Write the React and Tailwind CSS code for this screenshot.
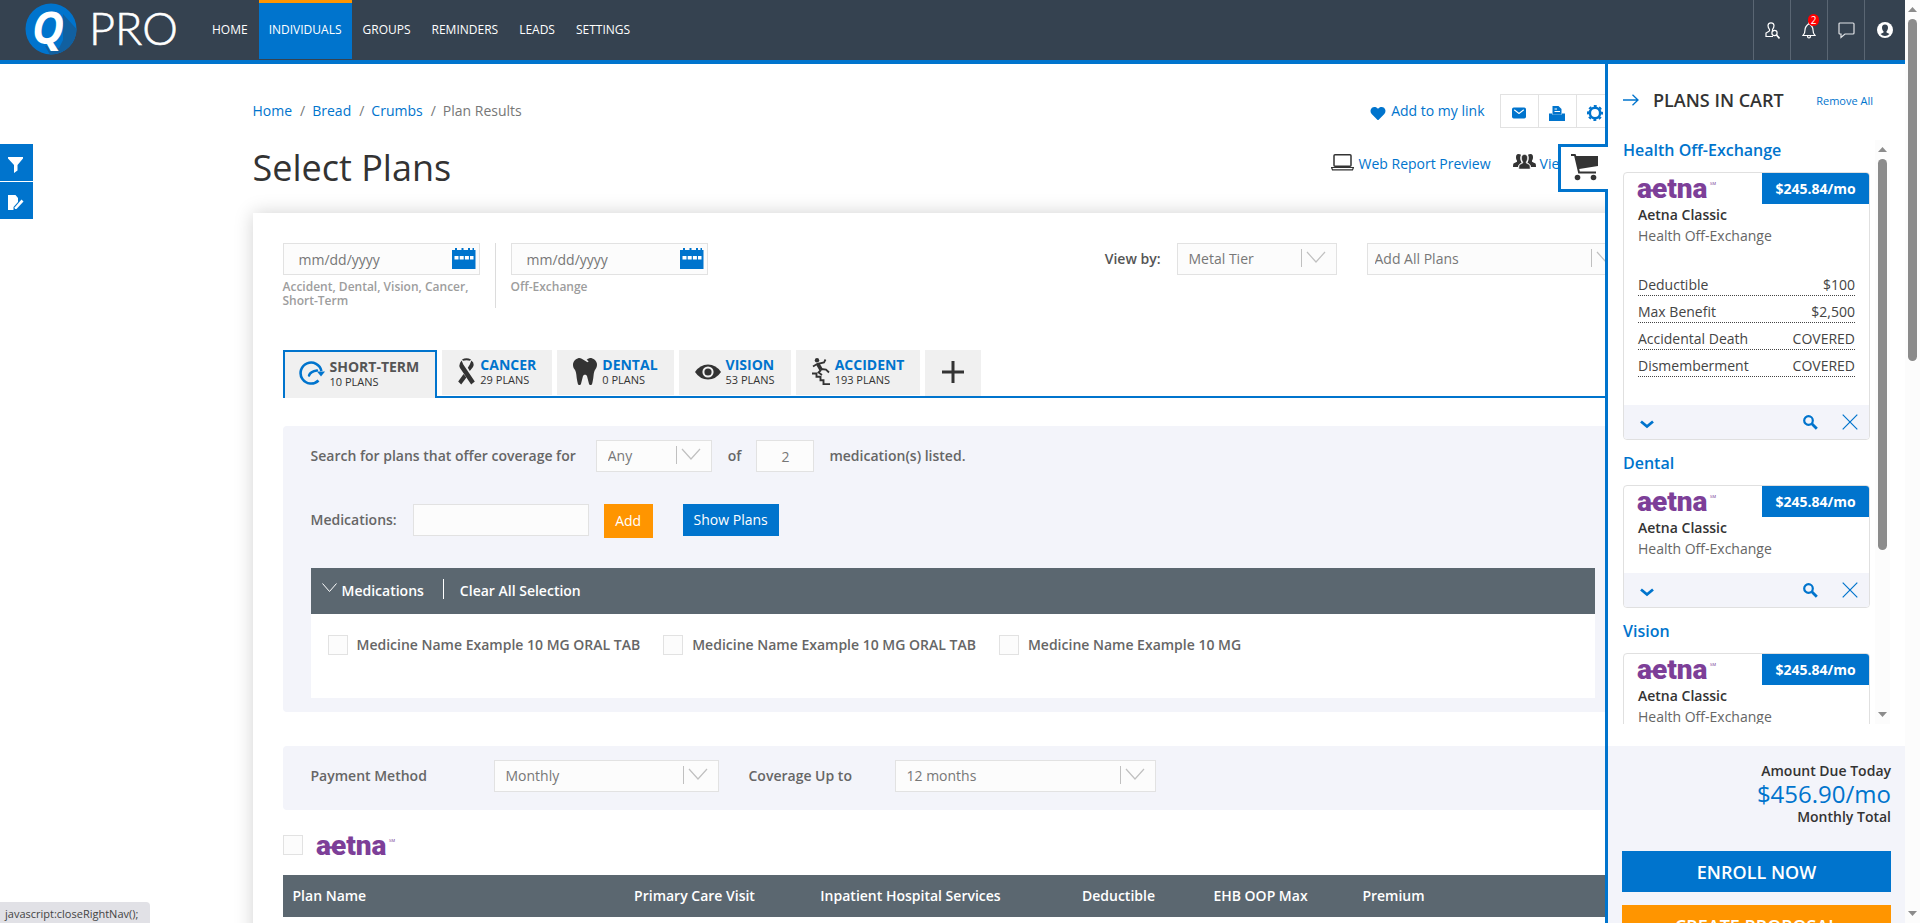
import { useState } from "react";
import { FaHeart, FaTooth } from "react-icons/fa";
import { IoMail } from "react-icons/io5";

const navLinks = ["Home", "Individuals", "Groups", "Reminders", "Leads", "Settings"];

const crumbs = ["Home", "Bread", "Crumbs"];

const planTabs = [
  { id: "short", label: "Short-Term", plans: 10, Icon: GaugeIcon },
  { id: "cancer", label: "Cancer", plans: 29, Icon: RibbonIcon },
  { id: "dental", label: "Dental", plans: 0, Icon: ToothIcon },
  { id: "vision", label: "Vision", plans: 53, Icon: EyeIcon },
  { id: "accident", label: "Accident", plans: 193, Icon: StairsIcon },
];

const medicines = [
  "Medicine Name Example 10 MG ORAL TAB",
  "Medicine Name Example 10 MG ORAL TAB",
  "Medicine Name Example 10 MG",
];

const cartPlans = [
  {
    title: "Health Off-Exchange",
    details: [
      ["Deductible", "$100"],
      ["Max Benefit", "$2,500"],
      ["Accidental Death", "COVERED"],
      ["Dismemberment", "COVERED"],
    ],
  },
  { title: "Dental" },
  { title: "Vision" },
];

function GaugeIcon() {
  return (
    <svg width="26" height="26" viewBox="0 0 26 26" fill="none" stroke="#0074cd">
      <path d="M19.5 20.5A10.5 10.5 0 1 1 22.4 11" strokeWidth="2.6" />
      <path d="M18 11.5h8l-4 5z" fill="#0074cd" stroke="none" />
      <path d="M10 15.5c1-3 4-4.500 8-5" strokeWidth="2.400" strokeLinecap="round" />
    </svg>
  );
}

function RibbonIcon() {
  return (
    <svg width="17" height="27" viewBox="0 0 17 27" fill="#333">
      <path d="M4 1.500Q8.500-.8 13 1.500l-1 1.300Q8.500 1.500 5 2.800z" />
      <path d="M3.600 2.500 5.300 6.500l11.500 17-3.600 3L2 10Q.8 7.500 2 5z" />
      <path d="m13.400 2.500-1.600 4-2 3.200 2 3.200 3.200-3.900q1.300-2 .2-4.500z" />
      <path d="m5.600 16 2.800 3.600L3.200 26.500.2 23.500z" />
    </svg>
  );
}

function ToothIcon() {
  return <FaTooth className="h-[27px] w-6 text-[#333]" preserveAspectRatio="none" />;
}

function EyeIcon() {
  return (
    <svg width="26" height="16" viewBox="0 0 26 16">
      <path d="M0 8Q5 .5 13 .5T26 8q-5 7.500-13 7.500T0 8z" fill="#333" />
      <circle cx="13" cy="8" r="4.600" fill="none" stroke="#f0f0f0" strokeWidth="2" />
    </svg>
  );
}

function StairsIcon() {
  return (
    <svg width="18" height="27" viewBox="0 0 18 27" fill="none" stroke="#333">
      <circle cx="5" cy="2.200" r="2.200" fill="#333" stroke="none" />
      <path d="M5.500 5.500 9 11.500" strokeWidth="3.600" />
      <path d="M1 8.500l4-2.500 7-1.500 1.500-3M9 11l5 .5 3 3M9 12l-2.500 2.500 3.500 2.500" strokeWidth="1.800" />
      <path d="M0 15.500h4.500v3.200h4v3.600h3v3.800H18" strokeWidth="1.900" />
    </svg>
  );
}

function AetnaLogo() {
  return (
    <svg width="80" height="27" viewBox="0 0 80 27" className="overflow-visible" role="img" aria-label="aetna">
      <text x="0" y="23" fontSize="28" fontWeight="900" fill="#7d3f98" fontFamily="Roboto, sans-serif">
        aetna
      </text>
      <path d="M13 15.500h5" stroke="#7d3f98" strokeWidth="2.500" />
      <text x="73" y="10" fontSize="4" fill="#7d3f98" fontFamily="Roboto, sans-serif">
        SM
      </text>
    </svg>
  );
}

function BrandLogo() {
  return (
    <svg width="153" height="56" viewBox="0 0 153 56" className="overflow-visible" role="img" aria-label="Q PRO">
      <clipPath id="disc">
        <circle cx="26" cy="29" r="25.500" />
      </clipPath>
      <circle cx="26" cy="29" r="25.500" fill="#0074cd" />
      <path d="M38 14 56 34v26H28L20 46l14 2 4-8z" fill="#1160a0" clipPath="url(#disc)" />
      <text x="7" y="44" fontSize="44" fontWeight="700" fontStyle="italic" fill="#fff" fontFamily="'Open Sans', sans-serif">
        Q
      </text>
      <text x="64" y="45" fontSize="45" fontWeight="300" fill="#fff" stroke="#fff" strokeWidth=".6" fontFamily="Lato, sans-serif">
        PRO
      </text>
    </svg>
  );
}

function Select({ id, width, padding = "pl-[11px]", children, label }) {
  return (
    <div className={`relative h-8 shrink-0 ${width}`}>
      <select
        id={id}
        aria-label={label}
        className={`h-full w-full appearance-none border border-[#e2e2e2] bg-[#fcfcfc] pr-9 text-sm text-[#777] ${padding}`}
      >
        {children}
      </select>
      <svg
        className="pointer-events-none absolute right-[11px] top-1.5"
        width="25"
        height="19"
        viewBox="0 0 25 19"
        fill="none"
        stroke="#c0c0c0"
      >
        <path d="M.5 0v18" />
        <path d="m6 3 9 10 9-10" strokeWidth="1.200" />
      </svg>
    </div>
  );
}

function DateField({ label, hint }) {
  return (
    <div className="w-[197px]">
      <div className="relative h-8">
        <input
          type="text"
          aria-label={label}
          placeholder="mm/dd/yyyy"
          className="h-full w-full border border-[#e2e2e2] bg-[#fcfcfc] pl-[15px] pr-10 text-sm placeholder:text-[#777]"
        />
        <button type="button" aria-label="Open calendar" className="absolute right-1 top-1">
          <svg width="24" height="24" viewBox="0 0 24 24" fill="#0074cd">
            <path d="M0 3h3V1h2v2h4.500V1h2v2H16V1h2v2h2.500V1h1.500v2h1.500v19H0z" />
            <path d="M2.500 9h4v3.500h-4zM7.700 9h4v3.500h-4zM12.900 9h4v3.500h-4zM18 9h3.500v3.500H18z" fill="#fff" />
          </svg>
        </button>
      </div>
      <p className="mt-[5px] text-xs font-semibold leading-[14px] text-[#9d9d9d]">{hint}</p>
    </div>
  );
}

function Checkbox({ label, id }) {
  return (
    <input
      type="checkbox"
      id={id}
      aria-label={label}
      className="h-5 w-5 shrink-0 appearance-none border border-[#e2e2e2] bg-[#fcfcfc] checked:bg-[#0074cd]"
    />
  );
}

function Header() {
  const [active, setActive] = useState("Individuals");

  return (
    <header className="flex h-16 shrink-0 border-b-4 border-[#0074cd] bg-[#354250] pl-[25px]">
      <a href="#home">
        <BrandLogo />
      </a>
      <nav className="ml-6 flex gap-px">
        {navLinks.map((link) => (
          <a
            key={link}
            href={`#${link.toLowerCase()}`}
            onClick={() => setActive(link)}
            className={`flex h-[59px] items-center border-t-[3px] px-2.5 pb-[3px] text-xs uppercase text-white ${
              active === link ? "border-[#ff9500] bg-[#0074cd]" : "border-transparent"
            }`}
          >
            {link}
          </a>
        ))}
      </nav>
      <div className="ml-auto flex text-white">
        <button type="button" aria-label="Find client" className="flex w-[37px] items-center justify-center border-l border-[#5a6673]">
          <svg width="15" height="17" viewBox="0 0 15 17" fill="none" stroke="#fff" strokeWidth="1.200">
            <path d="M4.500 9V7.500Q3 5.500 3 3.500 3.300.8 6 .8t3 2.700q0 2-1.500 4V9" />
            <path d="M4.500 9 1 11v3.500h7M8 8.500l1 .5" />
            <circle cx="9.500" cy="11" r="2.600" />
            <path d="m11.500 13 3 3.500" strokeWidth="1.600" />
          </svg>
        </button>
        <button type="button" aria-label="Notifications" className="relative flex w-[37px] items-center justify-center border-l border-[#5a6673]">
          <svg width="14" height="18" viewBox="0 0 14 18" fill="none" stroke="#fff" strokeWidth="1.200">
            <path d="M1 14.500h12q-2-2-2-5.500T7 2.500Q3 5.500 3 9t-2 5.500zM5.500 15q0 2 1.500 2t1.500-2M7 2.500V1" />
          </svg>
          <span className="absolute right-2 top-3.5 flex h-3 w-[11px] items-center justify-center rounded-full bg-[#f00] text-[10px] leading-none">
            2
          </span>
        </button>
        <button type="button" aria-label="Messages" className="flex w-[37px] items-center justify-center border-l border-[#5a6673]">
          <svg width="17" height="17" viewBox="0 0 17 17" fill="none" stroke="#dfe2e5" strokeWidth="1.200">
            <path d="M2 1h13q1 0 1 1v9q0 1-1 1H7l-4 3.500V12H2q-1 0-1-1V2q0-1 1-1z" />
          </svg>
        </button>
        <button type="button" aria-label="Account" className="flex w-[41px] items-center justify-center border-l border-[#5a6673]">
          <svg width="16" height="16" viewBox="0 0 16 16">
            <circle cx="8" cy="8" r="8" fill="#fff" />
            <path d="M8 2.500c2.300 0 3 1.600 3 3.200S10.300 8.500 9.500 9.300v1.200l3 1.600Q10.500 14 8 14t-4.500-1.900l3-1.600V9.300C5.700 8.500 5 7.300 5 5.700S5.700 2.500 8 2.500z" fill="#354250" />
          </svg>
        </button>
      </div>
    </header>
  );
}

function PageTop() {
  return (
    <div>
      <div className="flex h-[34px] items-center">
        <nav aria-label="Breadcrumb" className="flex gap-[7px] text-sm text-[#777]">
          {crumbs.map((crumb) => (
            <span key={crumb} className="flex gap-2">
              <a href="#crumb" className="text-[#0074cd]">
                {crumb}
              </a>
              /
            </span>
          ))}
          <span>Plan Results</span>
        </nav>
        <a href="#link" className="ml-auto flex items-center gap-[5px] text-sm text-[#0074cd]">
          <FaHeart className="mt-1 h-[15px] w-4" />
          Add to my link
        </a>
        <div className="ml-[15px] flex h-[34px] border border-[#e2e2e2] text-[#0074cd]">
          <button type="button" aria-label="Email" className="flex w-[37px] items-center justify-center pt-1">
            <IoMail className="h-4 w-[18px]" />
          </button>
          <button type="button" aria-label="Print" className="flex w-[38px] items-center justify-center border-l border-[#e2e2e2] pt-1">
            <svg width="16" height="16" viewBox="0 0 16 16" fill="currentColor">
              <path d="M3.500 1h6l3 3v5.500h-9z" />
              <path d="M0 8.500h3v3h10v-3h3V16H0z" />
              <path d="M3 11h10" stroke="currentColor" strokeWidth="3" />
              <path d="M5.500 4h2.500M5.500 6.500H11" stroke="#fff" />
            </svg>
          </button>
          <button type="button" aria-label="Settings" className="flex w-[38px] items-center justify-center border-l border-[#e2e2e2] pt-1">
            <svg width="16" height="16" viewBox="0 0 16 16" fill="none" stroke="currentColor">
              <circle cx="8" cy="8" r="5.200" strokeWidth="2.600" />
              <circle cx="8" cy="8" r="7" strokeWidth="2" strokeDasharray="2.900 2.600" strokeDashoffset="1.400" />
            </svg>
          </button>
          <button type="button" aria-label="More" className="w-[38px] border-l border-[#e2e2e2]" />
        </div>
      </div>
      <div className="mt-[13px] flex h-[50px] items-center">
        <h1 className="pt-[3px] text-4xl text-[#333]">Select Plans</h1>
        <div className="ml-auto flex w-[322px] pb-[5px] text-sm text-[#0074cd]">
          <a href="#report" className="flex items-center gap-[5px]">
            <svg width="23" height="18" viewBox="0 0 23 18" fill="none" stroke="#333" className="mb-1">
              <rect x="3" y="1.700" width="17" height="11.500" rx="1" strokeWidth="1.500" />
              <path d="M.5 14.500h22l-1 2.300h-20z" strokeWidth="1.200" />
            </svg>
            Web Report Preview
          </a>
          <a href="#view" className="ml-[22px] flex items-center gap-1">
            <svg width="23" height="17" viewBox="0 0 23 17" fill="#333" className="mb-1">
              <path d="M5.500 1C3.500 1 3 2.500 3 4.500c0 1.500.6 2.500 1 3.200v1.100L.5 10.500Q0 11 0 14h5q.3-3 3.500-4.200L7.800 8C7 6 7 3.500 8 1.800Q7 1 5.500 1z" />
              <path d="M17.500 1c2 0 2.500 1.500 2.500 3.500 0 1.500-.6 2.500-1 3.200v1.100l3.500 1.700q.5.500.5 3.500h-5q-.3-3-3.500-4.200l.7-1.800c.8-2 .8-4.500-.2-6.200Q16 1 17.500 1z" />
              <path d="M11.500 1.500c-2.200 0-3 1.500-3 3.500s.7 3 1.300 3.800V10l-3 1.500q-1 .5-1 4.500h11.400q0-4-1-4.500l-3-1.500V8.800c.6-.8 1.300-1.800 1.300-3.800s-.8-3.500-3-3.500z" stroke="#fff" strokeWidth=".5" />
            </svg>
            View
          </a>
        </div>
      </div>
    </div>
  );
}

function PlanTabs() {
  const [selected, setSelected] = useState("short");

  return (
    <div className="mt-[42px] flex h-12 items-end" role="tablist">
      {planTabs.map(({ id, label, plans, Icon }) => {
        const isActive = selected === id;
        return (
          <div
            key={id}
            className={`flex h-full ${isActive ? "" : "border-b-2 border-[#0074cd] pl-[5px]"}`}
          >
            <button
              type="button"
              role="tab"
              aria-selected={isActive}
              onClick={() => setSelected(id)}
              className={`flex items-center gap-[5px] bg-[#f0f0f0] ${
                isActive
                  ? "h-full border-2 border-b-0 border-[#0074cd] pb-1 pl-3.5 pr-4"
                  : "h-[45px] px-4 pb-0.5"
              }`}
            >
              <Icon />
              <span className="text-left">
                <span
                  className={`block text-sm font-bold uppercase leading-4 ${
                    isActive ? "text-[#555]" : "text-[#0074cd]"
                  }`}
                >
                  {label}
                </span>
                <span className="block text-[11px] uppercase leading-[13px] text-[#333]">
                  {plans} Plans
                </span>
              </span>
            </button>
          </div>
        );
      })}
      <div className="h-full flex-1 border-b-2 border-[#0074cd] pl-[5px]">
        <button type="button" aria-label="Add plan type" className="flex h-full w-14 items-center justify-center bg-[#f0f0f0] pb-0.5">
          <svg width="22" height="22" viewBox="0 0 22 22" stroke="#333" strokeWidth="3">
            <path d="M11 0v22M0 11h22" />
          </svg>
        </button>
      </div>
    </div>
  );
}

function MedicationSearch() {
  return (
    <section className="mt-7 rounded bg-[#f3f4fa] px-7 py-3.5 text-sm font-semibold text-[#666]">
      <div className="flex h-8 items-center">
        <label htmlFor="coverage">Search for plans that offer coverage for</label>
        <div className="ml-5 mr-4 font-normal">
          <Select id="coverage" width="w-[116px]">
            <option>Any</option>
            <option>All</option>
          </Select>
        </div>
        of
        <input
          type="text"
          defaultValue="2"
          aria-label="Number of medications"
          className="mx-[15px] h-8 w-[58px] border border-[#e2e2e2] bg-[#fcfcfc] text-center font-normal text-[#777]"
        />
        medication(s) listed.
      </div>
      <div className="mt-8 flex h-[34px] items-start">
        <label htmlFor="medication" className="flex h-8 items-center">
          Medications:
        </label>
        <input
          id="medication"
          type="text"
          className="ml-4 h-8 w-44 border border-[#e2e2e2] bg-[#fcfcfc] px-3 font-normal"
        />
        <button type="button" className="ml-[15px] h-[34px] w-[49px] bg-[#ff9500] font-normal text-white">
          Add
        </button>
        <button type="button" className="ml-[30px] h-8 w-24 bg-[#0074cd] font-normal text-white">
          Show Plans
        </button>
      </div>
      <div className="mt-[30px] flex h-[46px] items-center bg-[#5b6770] pl-[11px] text-white">
        <button type="button" className="flex items-center gap-[5px]">
          <svg width="15" height="10" viewBox="0 0 15 10" fill="none" stroke="#fff" className="mb-1.5">
            <path d="m.5.500 7 8 7-8" />
          </svg>
          Medications
        </button>
        <span className="mb-1 ml-[19px] h-5 w-px bg-white" />
        <button type="button" className="ml-4">
          Clear All Selection
        </button>
      </div>
      <div className="flex h-[84px] gap-[23px] bg-white pl-[17px] pt-[21px]">
        {medicines.map((name, i) => (
          <div key={i} className="flex h-5 items-center gap-[9px]">
            <Checkbox id={`med-${i}`} />
            <label htmlFor={`med-${i}`}>{name}</label>
          </div>
        ))}
      </div>
    </section>
  );
}

function PlanTable() {
  return (
    <>
      <section className="mt-[34px] flex items-center rounded bg-[#f3f4fa] px-7 pb-[18px] pt-3.5 text-sm font-semibold text-[#666]">
        <label htmlFor="payment" className="w-[183px]">
          Payment Method
        </label>
        <Select id="payment" width="w-[225px] font-normal">
          <option>Monthly</option>
        </Select>
        <label htmlFor="months" className="ml-[30px] w-[146px]">
          Coverage Up to
        </label>
        <Select id="months" width="w-[261px] font-normal">
          <option>12 months</option>
        </Select>
      </section>
      <div className="mt-[25px] flex h-5 items-center gap-[13px]">
        <Checkbox label="Select all Aetna plans" />
        <AetnaLogo />
      </div>
      <table className="mt-5 w-full table-fixed bg-[#5b6770] text-sm text-white">
        <colgroup>
          <col className="w-[312px]" />
          <col className="w-[200px]" />
          <col className="w-[232px]" />
          <col className="w-[184px]" />
          <col className="w-[100px]" />
          <col className="w-[166px]" />
          <col />
        </colgroup>
        <thead>
          <tr className="h-[42px] whitespace-nowrap">
            <th className="pl-2.5 text-left font-semibold">Plan Name</th>
            <th className="font-semibold">Primary Care Visit</th>
            <th className="font-semibold">Inpatient Hospital Services</th>
            <th className="font-semibold">Deductible</th>
            <th className="font-semibold">EHB OOP Max</th>
            <th className="font-semibold">Premium</th>
            <th />
          </tr>
        </thead>
      </table>
    </>
  );
}

function ScrollBar({ thumb }) {
  return (
    <div aria-hidden="true" className="flex w-[15px] shrink-0 flex-col items-center bg-[#fcfcfc]">
      <svg width="9" height="5" viewBox="0 0 9 5" fill="#8b8b8b" className="my-[7px] shrink-0">
        <path d="M4.500 0 9 5H0z" />
      </svg>
      <div className={`w-[9px] rounded-full bg-[#8b8b8b] ${thumb}`} />
      <svg width="9" height="5" viewBox="0 0 9 5" fill="#8b8b8b" className="mb-[7px] mt-auto shrink-0">
        <path d="M0 0h9L4.500 5z" />
      </svg>
    </div>
  );
}

function CartCard({ title, details }) {
  return (
    <section className="mb-[13px]">
      <h3 className="mb-3 text-base font-semibold leading-5 text-[#0074cd]">{title}</h3>
      <div className="overflow-hidden rounded border border-[#e0e0e0] bg-white">
        <div className="flex justify-between pl-[13px]">
          <div className="mt-0.5">
            <AetnaLogo />
          </div>
          <span className="flex h-[31px] w-[107px] items-center justify-center bg-[#0074cd] text-sm font-bold text-white">
            $245.84/mo
          </span>
        </div>
        <div className="px-3.5 text-sm">
          <p className="font-semibold leading-[21px] text-[#333]">Aetna Classic</p>
          <p className="leading-[21px] text-[#666]">Health Off-Exchange</p>
          {details && (
            <dl className="mt-7 text-[#444]">
              {details.map(([name, value]) => (
                <div key={name} className="mb-[5px] flex h-[22px] items-center justify-between border-b border-dotted border-[#444]">
                  <dt>{name}</dt>
                  <dd>{value}</dd>
                </div>
              ))}
            </dl>
          )}
        </div>
        <div className={`flex h-[34px] items-center bg-[#f3f4fa] pl-4 pr-[11px] ${details ? "mt-7" : "mt-3.5"}`}>
          <button type="button" aria-label="Show details">
            <svg width="14" height="9" viewBox="0 0 14 9" fill="none" stroke="#0074cd" strokeWidth="2.800" className="mt-1">
              <path d="m1 1.500 6 5 6-5" />
            </svg>
          </button>
          <button type="button" aria-label="Preview" className="ml-auto">
            <svg width="15" height="15" viewBox="0 0 15 15" fill="none" stroke="#0074cd">
              <circle cx="5.500" cy="5.500" r="4.300" strokeWidth="2.200" />
              <path d="m8.800 8.800 5 5" strokeWidth="2.800" />
            </svg>
          </button>
          <button type="button" aria-label="Remove" className="ml-6">
            <svg width="16" height="16" viewBox="0 0 16 16" stroke="#0074cd" strokeWidth="1.200">
              <path d="m.7.700 14.600 14.600M15.300.7.700 15.300" />
            </svg>
          </button>
        </div>
      </div>
    </section>
  );
}

function CartPanel() {
  return (
    <aside className="absolute bottom-0 right-0 top-16 flex w-[300px] flex-col border-l-[3px] border-[#0074cd] bg-white">
      <button
        type="button"
        aria-label="Toggle cart"
        className="absolute -left-[50px] top-20 flex h-12 w-[50px] items-center justify-center border-[3px] border-r-0 border-[#0074cd] bg-white pb-0.5"
      >
        <svg width="27" height="27" viewBox="0 0 27 27" fill="#333">
          <path d="M0 0h4.500l.8 2H27v10L8.200 15l.6 2.500H25v2H7.300L3.200 2H0z" />
          <circle cx="6.500" cy="23.500" r="2.800" />
          <circle cx="22.500" cy="23.500" r="2.800" />
        </svg>
      </button>
      <div className="flex h-[76px] shrink-0 items-center pb-1 pl-[15px] pr-8">
        <button type="button" aria-label="Close cart">
          <svg width="16" height="12" viewBox="0 0 16 12" fill="none" stroke="#0074cd" strokeWidth="1.300">
            <path d="M0 6h15M9.500.7 15 6l-5.500 5.300" />
          </svg>
        </button>
        <h2 className="ml-3.5 text-lg font-semibold text-[#333]">PLANS IN CART</h2>
        <button type="button" className="ml-auto pt-0.5 text-[11px] text-[#0074cd]">
          Remove All
        </button>
      </div>
      <div className="mb-[22px] flex h-[calc(100vh-339px)] shrink-0 justify-between overflow-hidden px-[15px]">
        <div className="w-[247px]">
          {cartPlans.map((plan) => (
            <CartCard key={plan.title} {...plan} />
          ))}
        </div>
        <ScrollBar thumb="h-[67%]" />
      </div>
      <div className="shrink-0 bg-[#f3f4fa] px-3.5 pt-3.5 text-right text-sm font-semibold leading-[22px] text-[#333]">
        <p>Amount Due Today</p>
        <p className="text-2xl font-normal leading-6 text-[#0074cd]">$456.90/mo</p>
        <p>Monthly Total</p>
        <button type="button" className="mt-[23px] h-[41px] w-full bg-[#0074cd] text-lg font-semibold text-white">
          ENROLL NOW
        </button>
        <button type="button" className="mt-[13px] h-[41px] w-full bg-[#ff9500] text-lg font-semibold text-white">
          CREATE PROPOSAL
        </button>
      </div>
    </aside>
  );
}

export default function App() {
  return (
    <div className="flex h-screen overflow-hidden bg-white font-['Open_Sans',sans-serif]">
      <div className="relative flex min-w-0 flex-1 flex-col overflow-hidden">
        <Header />
        <main className="mx-auto w-full max-w-[1400px] pt-[30px]">
          <PageTop />
          <div className="mt-[22px] min-h-screen px-[30px] pt-[30px] shadow-[0_0_18px_rgba(0,0,0,0.18)]">
            <div className="flex h-[65px] items-start">
              <DateField label="Effective date" hint="Accident, Dental, Vision, Cancer, Short-Term" />
              <span className="mx-[15px] h-full w-px bg-[#dcdcdc]" />
              <DateField label="Off-Exchange effective date" hint="Off-Exchange" />
              <div className="-mr-1 ml-auto flex items-center text-sm">
                <label htmlFor="view-by" className="mr-4 font-semibold text-[#555]">
                  View by:
                </label>
                <Select id="view-by" width="w-40">
                  <option>Metal Tier</option>
                </Select>
                <div className="ml-[30px]">
                  <Select label="Add plans" width="w-[260px]" padding="pl-[7px]">
                    <option>Add All Plans</option>
                  </Select>
                </div>
              </div>
            </div>
            <PlanTabs />
            <MedicationSearch />
            <PlanTable />
          </div>
        </main>
        <div className="absolute left-0 top-36 flex flex-col gap-px">
          <button type="button" aria-label="Filter" className="flex h-[37px] w-[33px] items-center justify-center bg-[#0074cd] pr-0.5 pt-1">
            <svg width="15" height="16" viewBox="0 0 15 16" fill="#fff">
              <path d="M0 0h15v1.500L9.500 8v5.500L6 16V8L0 1.500z" />
            </svg>
          </button>
          <button type="button" aria-label="Edit" className="flex h-[37px] w-[33px] items-center justify-center bg-[#0074cd] pr-0.5 pt-1">
            <svg width="16" height="15" viewBox="0 0 16 15" fill="#fff">
              <path d="M0 0h7.500L10 3v4L5.500 12v3H0z" />
              <path d="m13.500 4.500 2 2-7 7.500H6.800v-1.800z" />
            </svg>
          </button>
        </div>
        <CartPanel />
        <div className="absolute bottom-0 left-0 h-[21px] rounded-tr bg-[#e1e1e6] pl-[5px] pr-3 text-[11px] leading-6 text-[#444]">
          javascript:closeRightNav();
        </div>
      </div>
      <ScrollBar thumb="h-[342px]" />
    </div>
  );
}
